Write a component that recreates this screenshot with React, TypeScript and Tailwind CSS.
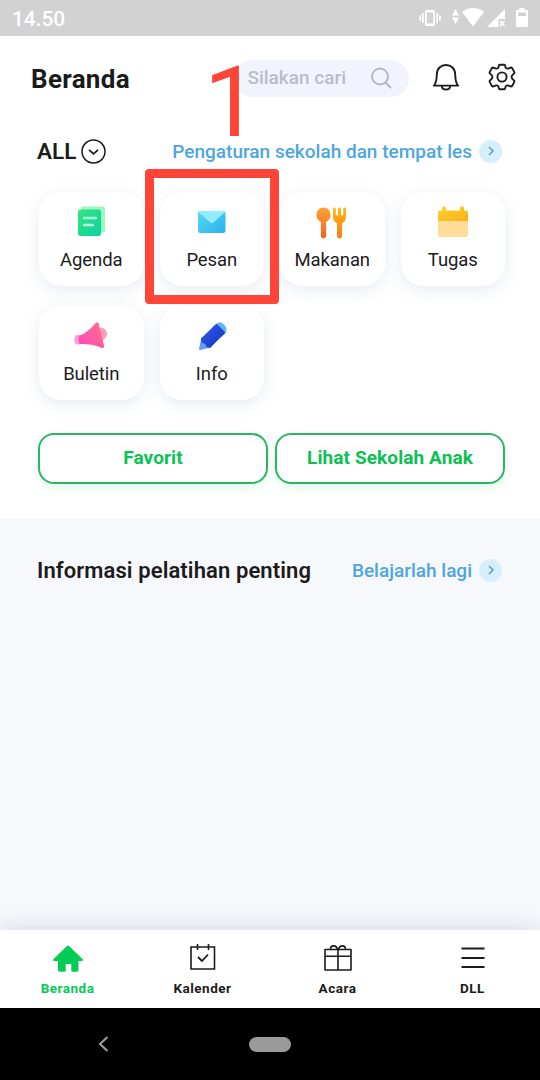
import type { ReactNode } from "react";

function VibrateIcon() {
  return (
    <svg className="h-4 w-[22px] shrink-0" viewBox="0 0 22 16" fill="#fff">
      <path fillRule="evenodd" d="M7.500 0h7a1.500 1.500 0 0 1 1.500 1.500v13a1.500 1.500 0 0 1-1.500 1.500h-7a1.500 1.500 0 0 1-1.500-1.500v-13A1.500 1.500 0 0 1 7.500 0ZM7.800 2.500v11h6.400v-11Z" />
      <path d="M3 3h1.700v10H3zM.3 5.300H2v5.400H.3zM17.300 3H19v10h-1.700zM20 5.300h1.700v5.400H20z" />
    </svg>
  );
}

function StatusBar() {
  return (
    <header className="flex h-9 shrink-0 items-center bg-[#d2d2d2] pl-3 text-white">
      <span className="grow pt-[2px] text-[21px] font-medium leading-none tracking-[-0.1px]">14.50</span>
      <VibrateIcon />
      <svg className="ml-[11px] mt-[-3px] h-[15px] w-[7px]" viewBox="0 0 7 15" fill="#fff">
        <path d="M3.500 0 7 6.500H0zM3.500 15 0 8.500h7z" />
      </svg>
      <svg className="ml-[3px] mt-[-1px] h-[19px] w-[22px]" viewBox="0 0 22 19" fill="#fff">
        <path d="M0 4C6-1.200 16-1.200 22 4L11 18.500Z" />
      </svg>
      <svg className="ml-[3px] mt-[-1px] h-[18px] w-[19px]" viewBox="0 0 19 18" fill="#fff">
        <path d="M18 0v10h-6.500v8H0Z" />
        <path d="m13 12 4.500 5M17.500 12 13 17" stroke="#fff" strokeWidth="1.800" />
      </svg>
      <svg className="ml-[10px] mr-3 mt-[-1px] h-[19px] w-3" viewBox="0 0 12 19">
        <path fill="#fff" d="M3.500 0h5v2H11a1 1 0 0 1 1 1v15a1 1 0 0 1-1 1H1a1 1 0 0 1-1-1V3a1 1 0 0 1 1-1h2.500Z" />
        <path fill="#d2d2d2" d="M2 4.500h8V8H2z" />
      </svg>
    </header>
  );
}

function BellIcon() {
  return (
    <svg className="h-7 w-7" viewBox="0 0 28 28" fill="none" stroke="#1b1b1b" strokeWidth="1.900" strokeLinejoin="round">
      <path d="M1.800 22.600H26.200C23.400 20 23.400 16.500 23.200 11.500C23.200 5.500 19 2 14 2S4.800 5.500 4.800 11.500C4.600 16.500 4.600 20 1.800 22.600Z" />
      <path d="M9.700 22.800c.6 5 8 5 8.600 0" />
    </svg>
  );
}

function GearIcon() {
  return (
    <svg className="h-7 w-7" viewBox="0 0 28 28" fill="none" stroke="#1b1b1b" strokeWidth="1.900" strokeLinejoin="round">
      <path d="M11.800 1.700h4.400q1 .2 1.100 1.300 0 3 2.700 2.600l2.600-1q1-.2 1.700.8l1.900 3.500q.5 1-.4 1.800c-3 2.200-3 4.400 0 6.600q.9.800.4 1.800l-1.900 3.500q-.7 1-1.700.8l-2.600-1q-2.700-.4-2.700 2.600-.1 1.100-1.100 1.300h-4.400q-1-.2-1.100-1.300 0-3-2.700-2.600l-2.600 1q-1 .2-1.700-.8L1.800 19.100q-.5-1 .4-1.800c3-2.200 3-4.400 0-6.600q-.9-.8-.4-1.800l1.900-3.500q.7-1 1.700-.8l2.600 1q2.700.4 2.700-2.600.1-1.100 1.100-1.300Z" />
      <circle cx="14" cy="14" r="4.600" />
    </svg>
  );
}

function AgendaIcon() {
  return (
    <svg className="h-9 w-9" viewBox="0 0 36 36">
      <defs>
        <linearGradient id="agenda" x1="0" y1="0" x2="1" y2="1">
          <stop stopColor="#35e57e" />
          <stop offset="1" stopColor="#08d3a2" />
        </linearGradient>
      </defs>
      <rect x="8" y="2.500" width="24" height="26" rx="2" fill="#9af8bf" />
      <rect x="5" y="5.500" width="23" height="26.500" rx="2.500" fill="url(#agenda)" />
      <path d="M11 14h12M11 21h9" stroke="#b5ffde" strokeWidth="2.400" strokeLinecap="round" />
    </svg>
  );
}

function MailIcon() {
  return (
    <svg className="h-9 w-9" viewBox="0 0 36 36">
      <defs>
        <linearGradient id="mail" x1="0" y1="0" x2="1" y2="1">
          <stop stopColor="#56dcef" />
          <stop offset="1" stopColor="#2baff0" />
        </linearGradient>
      </defs>
      <rect x="4" y="7" width="27.500" height="22" rx="2.500" fill="url(#mail)" />
      <path d="M6 7h23.500q2 0 1.200 1.500L19.200 18.600q-1.400 1.200-2.800 0L4.700 8.500Q4 7 6 7Z" fill="#91edff" />
    </svg>
  );
}

function FoodIcon() {
  return (
    <svg className="h-9 w-9" viewBox="0 0 36 36">
      <defs>
        <linearGradient id="spoon" x1="0" y1="0" x2="0" y2="1">
          <stop stopColor="#ffa238" />
          <stop offset="1" stopColor="#f1641b" />
        </linearGradient>
        <linearGradient id="fork" x1="0" y1="0" x2="0" y2="1">
          <stop stopColor="#ffba16" />
          <stop offset="1" stopColor="#fa7a10" />
        </linearGradient>
      </defs>
      <path fill="url(#spoon)" d="M9.500 3.500c4.200 0 7 3.400 7 7.500 0 3.300-1.800 5.900-4.400 6.900V32c0 3.200-5.200 3.200-5.200 0V17.900c-2.600-1-4.400-3.600-4.400-6.900 0-4.100 2.800-7.500 7-7.500Z" />
      <path fill="url(#fork)" d="M19 5c0-2 2.800-2 2.800 0v6.200h2.200V5c0-2 3-2 3 0v6.200h2.200V5c0-2 2.800-2 2.800 0v8c0 3.500-1.600 5.300-4 6.200V32c0 3.200-5 3.200-5 0V19.200c-2.400-.9-4-2.700-4-6.200Z" />
    </svg>
  );
}

function TaskIcon() {
  return (
    <svg className="h-9 w-9" viewBox="0 0 36 36">
      <defs>
        <linearGradient id="task" x1="0" y1="0" x2="1" y2="1">
          <stop stopColor="#ffd52e" />
          <stop offset="1" stopColor="#faaf18" />
        </linearGradient>
      </defs>
      <path d="M3 15h30v16q0 2-2 2H5q-2 0-2-2Z" fill="#ffdc98" />
      <path d="M3 17V8.500q0-2 2-2h2V4.500c0-3 4-3 4 0v2h14v-2c0-3 4-3 4 0v2h2q2 0 2 2V17Z" fill="url(#task)" />
    </svg>
  );
}

function MegaphoneIcon() {
  return (
    <svg className="h-9 w-9" viewBox="0 0 36 36">
      <defs>
        <linearGradient id="horn" x1="0" y1="1" x2="1" y2="0">
          <stop stopColor="#fc49bd" />
          <stop offset="1" stopColor="#ff7184" />
        </linearGradient>
      </defs>
      <circle cx="27.500" cy="16" r="6.500" fill="#ff9cbd" />
      <rect x="1.500" y="17" width="8" height="9.500" rx="3" fill="#ff9de1" />
      <path d="M5.500 18C13 15.500 18 10 22.500 5.200q2.300-2.200 3.200.6L31 27.500q.6 2.800-2.300 2.400C21 26.500 13 25.700 6.500 26Q5.500 22 5.500 18Z" fill="url(#horn)" />
    </svg>
  );
}

function PencilIcon() {
  return (
    <svg className="h-9 w-9" viewBox="0 0 36 36">
      <defs>
        <linearGradient id="pencil" x1="0" y1="0" x2="1" y2="1">
          <stop stopColor="#315ff1" />
          <stop offset="1" stopColor="#1430b8" />
        </linearGradient>
      </defs>
      <path d="M21 7q4.500-5 9-.5t1 9.500L27 19 18 10Z" fill="#63b5ff" />
      <path d="M7.500 19 5 31q0 1.200 1.500 1L18 29Z" fill="#609cff" />
      <path d="m7 20.500 14.500-14q1-1 2 0l7 7q1 1 0 2L16.500 29.500q-4 1-4.500-2-.3-1.800-2.500-2Q6.500 24.500 7 20.500Z" fill="url(#pencil)" />
    </svg>
  );
}

function Tile({ label, children }: { label: string; children: ReactNode }) {
  return (
    <div className="flex h-[94px] flex-col items-center rounded-[22px] bg-white pt-3 shadow-[0_4px_16px_rgba(70,90,150,0.13)]">
      {children}
      <span className="mt-2 text-[18.500px] leading-6 tracking-[-0.1px]">{label}</span>
    </div>
  );
}

function MoreLink({ label }: { label: string }) {
  return (
    <a className="flex items-center gap-[7px] text-[19px] font-medium leading-6 text-[#4da6df]">
      <span className="pt-[2px]">{label}</span>
      <span className="flex h-[23px] w-[23px] items-center justify-center rounded-full bg-[#d9eefd]">
        <svg className="h-3 w-3" viewBox="0 0 12 12" fill="none" stroke="#4ba0d8" strokeWidth="1.500">
          <path d="m4 2 4 4-4 4" />
        </svg>
      </span>
    </a>
  );
}

function NavItem({ label, active, children }: { label: string; active?: boolean; children: ReactNode }) {
  return (
    <a className={active ? "flex flex-col items-center pt-3 text-[#03cb55]" : "flex flex-col items-center pt-3 text-[#1b1b1b]"}>
      {children}
      <span className="mt-1 text-[13.500px] font-bold leading-5 tracking-[0.5px]">{label}</span>
    </a>
  );
}

function OutlineButton({ label }: { label: string }) {
  return (
    <button className="h-[51px] rounded-[16px] border-2 border-[#2eb562] bg-white pb-[1px] text-[19px] font-bold tracking-[0.1px] text-[#0bc154] shadow-[0_4px_9px_rgba(20,210,100,0.13)]">
      {label}
    </button>
  );
}

export default function App() {
  return (
    <div className="relative flex h-[1080px] w-[540px] flex-col overflow-hidden bg-white font-['Roboto',sans-serif] text-[#1b1b1b]">
      <StatusBar />
      <main className="flex h-[483px] shrink-0 flex-col">
        <div className="mt-6 flex h-9 items-center pl-[31px] pr-6">
          <h1 className="w-[204px] pt-[2px] text-[26px] font-bold leading-[30px] tracking-[0.3px]">Beranda</h1>
          <div className="flex h-[37px] w-[175px] items-center justify-between rounded-full bg-[#f1f4fd] pl-[13px] pr-[17px]">
            <span className="text-[19px] font-medium leading-6 text-[#b9bdc9]">Silakan cari</span>
            <svg className="h-[22px] w-[22px]" viewBox="0 0 22 22" fill="none" stroke="#b2b5bd" strokeWidth="1.800">
              <circle cx="10" cy="9.500" r="8" />
              <path d="m15.500 15.500 5 5" strokeLinecap="round" />
            </svg>
          </div>
          <div className="-mt-[2px] ml-[23px] flex gap-7">
            <BellIcon />
            <GearIcon />
          </div>
        </div>

        <div className="mt-[42px] flex h-[26px] items-center justify-between pl-[37px] pr-[38px]">
          <div className="flex items-center gap-[5px]">
            <span className="text-[22.500px] font-semibold leading-[26px]">ALL</span>
            <svg className="h-[25px] w-[25px]" viewBox="0 0 25 25" fill="none" stroke="#1b1b1b" strokeWidth="1.500">
              <circle cx="12.500" cy="12.500" r="11.500" />
              <path d="m8 10.800 4.500 4 4.500-4" strokeWidth="1.800" />
            </svg>
          </div>
          <MoreLink label="Pengaturan sekolah dan tempat les" />
        </div>

        <div className="mt-7 grid grid-cols-4 gap-x-4 gap-y-5 pl-[39px] pr-[35px]">
          <Tile label="Agenda"><AgendaIcon /></Tile>
          <Tile label="Pesan"><MailIcon /></Tile>
          <Tile label="Makanan"><FoodIcon /></Tile>
          <Tile label="Tugas"><TaskIcon /></Tile>
          <Tile label="Buletin"><MegaphoneIcon /></Tile>
          <Tile label="Info"><PencilIcon /></Tile>
        </div>

        <div className="mt-[33px] grid grid-cols-2 gap-[7px] pl-[38px] pr-[35px]">
          <OutlineButton label="Favorit" />
          <OutlineButton label="Lihat Sekolah Anak" />
        </div>
      </main>

      <section className="grow bg-[#f7f8fc] pl-[37px] pr-[38px] pt-[38px]">
        <div className="flex h-[26px] items-center justify-between">
          <h2 className="pt-[2px] text-[22px] font-semibold leading-[26px] tracking-[0.1px]">Informasi pelatihan penting</h2>
          <MoreLink label="Belajarlah lagi" />
        </div>
      </section>

      <nav className="grid h-[78px] shrink-0 grid-cols-4 bg-white shadow-[0_-2px_20px_rgba(80,75,140,0.18)]">
        <NavItem label="Beranda" active>
          <svg className="h-8 w-8" viewBox="0 0 32 32" fill="currentColor">
            <path d="M15 4q1-1 2 0l13.700 13.300q1 1.700-1 1.700H26.500v9q0 1.800-1.800 1.800h-4.400q-1 0-1-1V22h-5.600v6.800q0 1-1 1H8q-2 0-2-1.800v-9H2.300q-2 0-1-1.700Z" />
          </svg>
        </NavItem>
        <NavItem label="Kalender">
          <svg className="h-8 w-8" viewBox="0 0 32 32" fill="none" stroke="currentColor" strokeWidth="1.600">
            <path d="M4 5h23.500v22H4zM10.500 2v6M21.500 2v6" />
            <path d="m11 15 4 4 6-6.500" strokeWidth="1.800" />
          </svg>
        </NavItem>
        <NavItem label="Acara">
          <svg className="h-8 w-8" viewBox="0 0 32 32" fill="none" stroke="currentColor" strokeWidth="1.600" strokeLinejoin="round">
            <path d="M3 7.500h26V28H3zM3 14.300h26M16 7.500V28" />
            <path d="M15.500 7.500C14.500 2.700 8.500 2.700 8.500 7.500M16.500 7.500c1-4.800 7-4.800 7 0" />
          </svg>
        </NavItem>
        <NavItem label="DLL">
          <svg className="h-8 w-8" viewBox="0 0 32 32" fill="none" stroke="currentColor" strokeWidth="1.800">
            <path d="M4.500 6.500h23M4.500 16h23M4.500 25h23" />
          </svg>
        </NavItem>
      </nav>

      <footer className="flex h-[72px] shrink-0 items-center bg-black pl-[98px]">
        <svg className="h-4 w-[11px]" viewBox="0 0 11 16" fill="none" stroke="#999" strokeWidth="2.200">
          <path d="M9.500 1 2 8l7.500 7" />
        </svg>
        <span className="ml-[140px] h-[15px] w-[42px] rounded-full bg-[#9a9a9a]" />
      </footer>

      <div className="pointer-events-none absolute left-[145px] top-[169px] h-[135px] w-[134px] rounded-[4px] border-[9px] border-[#ff4438]" />
      <span className="pointer-events-none absolute left-[204px] top-[54px] text-[98px] leading-[98px] text-[#ff4438]">1</span>
    </div>
  );
}
